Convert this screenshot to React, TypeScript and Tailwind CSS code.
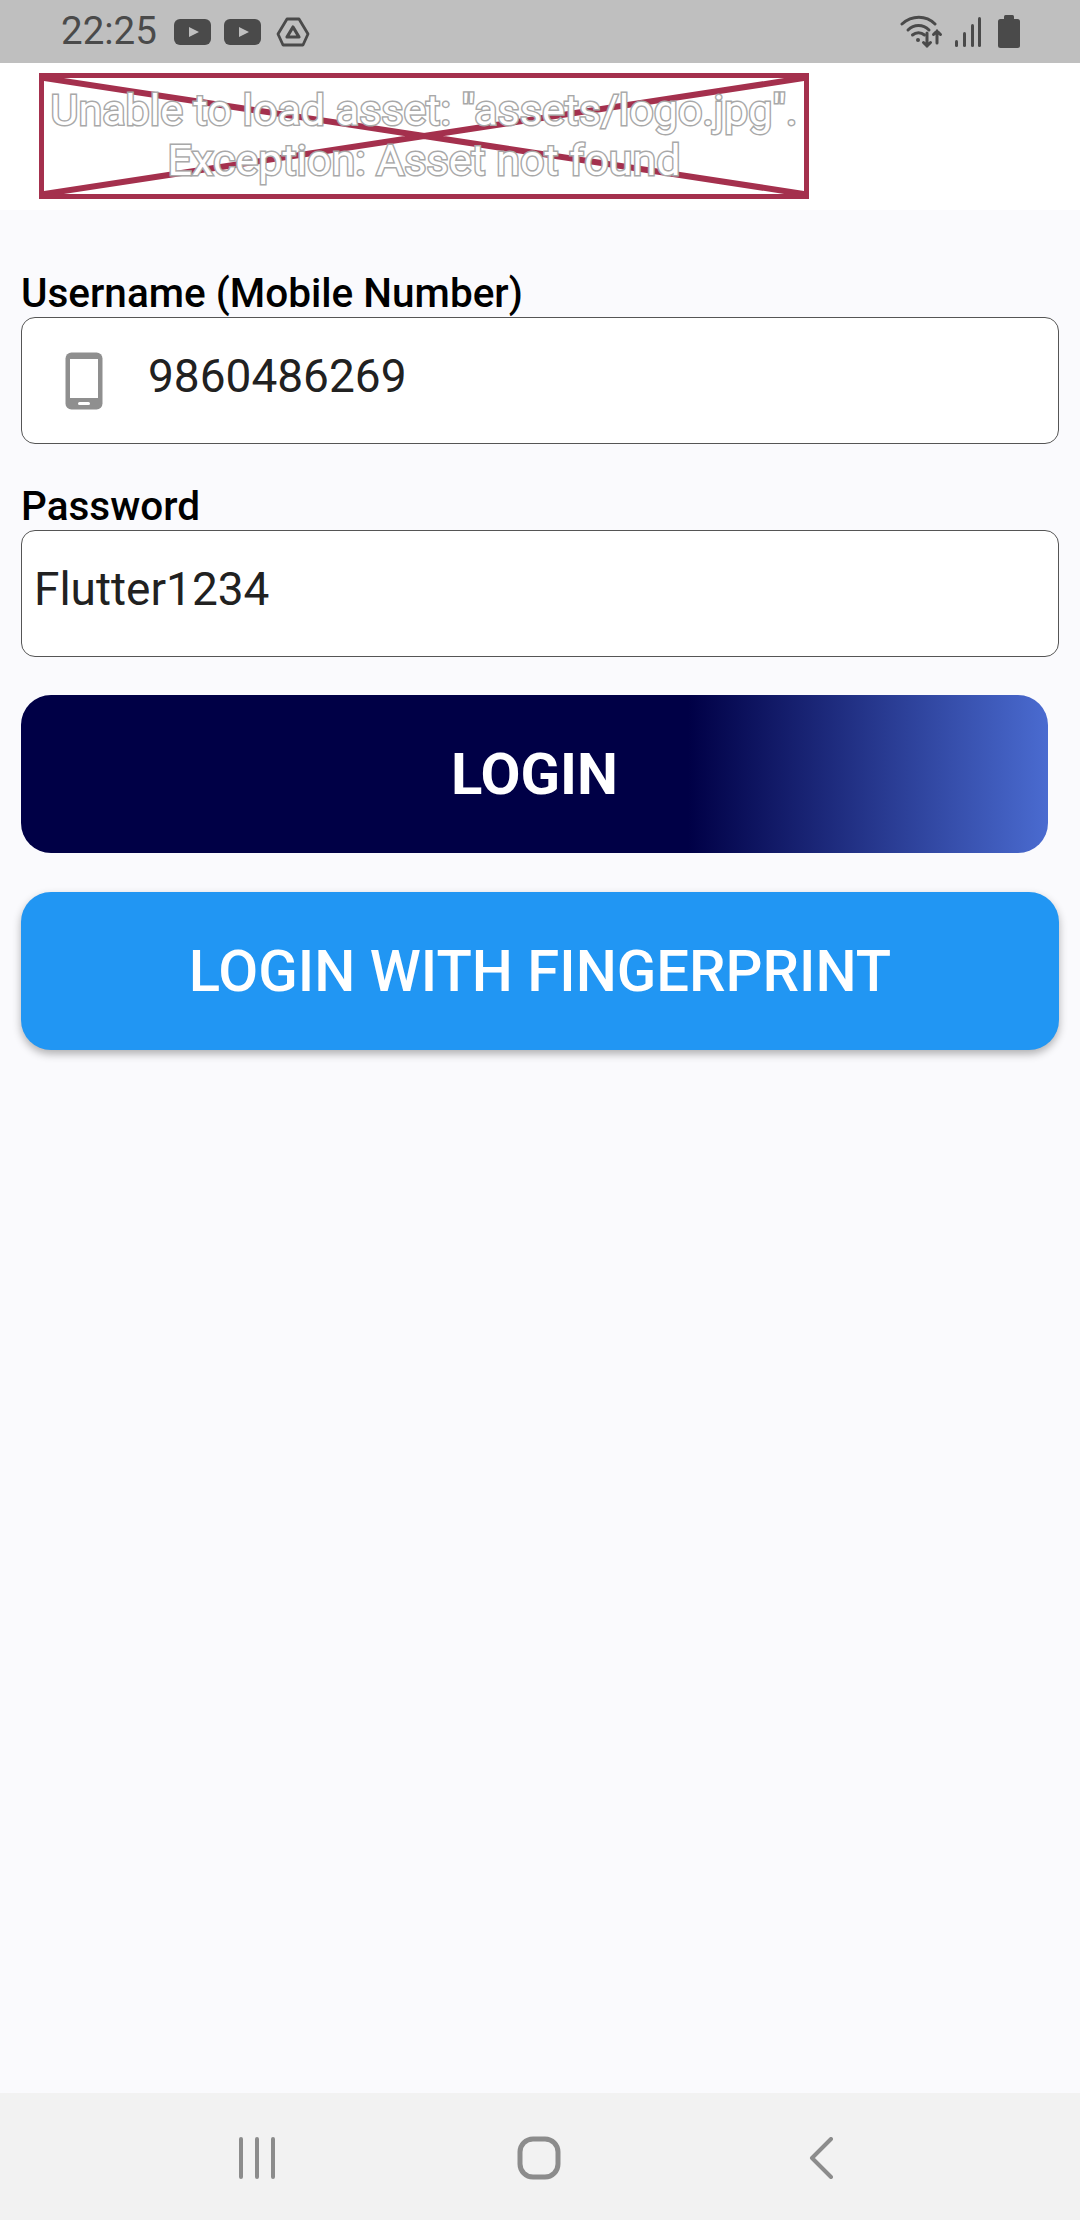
const font = "font-['Roboto',sans-serif]";

function PlayBadge() {
  return (
    <svg width="37" height="26" viewBox="0 0 37 26">
      <rect width="37" height="26" rx="6" fill="#4a4a4a" />
      <path d="M15 8 L25 13 L15 18 Z" fill="#bfbfbf" />
    </svg>
  );
}

function StatusBar() {
  return (
    <div className="h-[63px] bg-[#bfbfbf] flex items-center pl-[61px] pr-[60px] text-[#4a4a4a]">
      <span className="text-[38.5px] leading-none">22:25</span>
      <div className="ml-[17px] flex items-center gap-[13px]">
        <PlayBadge />
        <PlayBadge />
        <svg width="34" height="30" viewBox="0 0 34 30" className="ml-[2px]" fill="none" stroke="#4a4a4a">
          <path d="M11 2 H23 L32 17 L27 28 H7 L2 17 Z" strokeWidth="2.8" strokeLinejoin="round" />
          <path d="M17 10 L23 20 H11 Z" strokeWidth="3.2" strokeLinejoin="round" />
        </svg>
      </div>
      <div className="ml-auto flex items-center gap-[10px]">
        <svg width="44" height="34" viewBox="0 0 44 34" fill="none" stroke="#4a4a4a" strokeWidth="3" strokeLinecap="round">
          <path d="M2 9 C12 0 26 0 35 9" />
          <path d="M8 15 C14 9 23 9 29 15" />
          <path d="M12.5 20 C16 17 21 17 24.5 20" />
          <circle cx="18" cy="25" r="2" fill="#4a4a4a" stroke="none" />
          <path d="M27 18 V31 M23.5 27.5 L27 31 L30.5 27.5" />
          <path d="M37 28 V16 M33.5 19.5 L37 16 L40.5 19.5" />
        </svg>
        <svg width="28" height="32" viewBox="0 0 28 32" fill="#4a4a4a">
          <rect x="1" y="24" width="3" height="7" rx="1.5" />
          <rect x="9" y="16" width="3" height="15" rx="1.5" />
          <rect x="17" y="8" width="3" height="23" rx="1.5" />
          <rect x="24" y="1" width="3" height="30" rx="1.5" />
        </svg>
        <svg width="22" height="33" viewBox="0 0 22 33" fill="#4a4a4a" className="ml-[6px]">
          <rect x="6" y="0" width="10" height="5" rx="1.5" />
          <rect x="0" y="4" width="22" height="29" rx="2.5" />
        </svg>
      </div>
    </div>
  );
}

function LogoError() {
  return (
    <div className="h-[147px] bg-white pt-[10px] pl-[39px]">
      <div className="relative w-[770px] h-[126px] border-[5px] border-[#a4304d]">
        <svg className="absolute inset-0 w-full h-full" viewBox="0 0 760 116" preserveAspectRatio="none">
          <path d="M0 0 L760 116 M760 0 L0 116" stroke="#a4304d" strokeWidth="6" fill="none" />
        </svg>
        <div className="relative text-center text-white text-[43px] leading-[50px] mt-[7px] whitespace-nowrap [-webkit-text-stroke:3px_#a8a8a8] [paint-order:stroke_fill]">
          Unable to load asset: "assets/logo.jpg".
          <br />
          Exception: Asset not found
        </div>
      </div>
    </div>
  );
}

function Field({ children }: { children: React.ReactNode }) {
  return (
    <div className="h-[127px] bg-white border border-[#555] rounded-[14px] flex items-start text-[#212121] text-[46px] leading-none">
      {children}
    </div>
  );
}

function NavBar() {
  return (
    <div className="h-[127px] bg-[#f2f2f2] relative flex items-start pt-[44px] pl-[239px]">
      <svg width="38" height="42" viewBox="0 0 38 42" stroke="#8c8c8c" strokeWidth="4" strokeLinecap="round">
        <path d="M2 2 V40 M18 2 V40 M34 2 V40" />
      </svg>
      <svg width="44" height="44" viewBox="0 0 44 44" fill="none" stroke="#8c8c8c" strokeWidth="5" className="ml-[240px] -mt-[1px]">
        <rect x="3" y="3" width="38" height="38" rx="13" />
      </svg>
      <svg width="26" height="42" viewBox="0 0 26 42" fill="none" stroke="#8c8c8c" strokeWidth="4" strokeLinecap="round" strokeLinejoin="round" className="ml-[247px]">
        <path d="M23 2 L4 21 L23 40" />
      </svg>
    </div>
  );
}

export default function App() {
  return (
    <div className={`${font} w-[1080px] h-[2220px] bg-[#fafafd] flex flex-col overflow-hidden`}>
      <StatusBar />
      <LogoError />
      <main className="flex-1 px-[21px] pt-[60px]">
        <div className="text-[40.5px] font-medium leading-[47px] text-black relative z-10">Username (Mobile Number)</div>
        <Field>
          <svg width="38" height="58" viewBox="0 0 38 58" className="ml-[43px] mt-[34px]">
            <rect x="0.5" y="0.5" width="37" height="57" rx="6" fill="#8f8f8f" />
            <rect x="5" y="7" width="28" height="39" fill="#fff" />
            <rect x="13" y="50" width="12" height="3" rx="1.5" fill="#fff" />
          </svg>
          <span className="ml-[45px] mt-[35px]">9860486269</span>
        </Field>
        <div className="text-[40.5px] font-medium leading-[47px] text-black mt-[39px]">Password</div>
        <Field>
          <span className="ml-[12px] mt-[35px]">Flutter1234</span>
        </Field>
        <button className="mt-[38px] w-[1027px] h-[158px] rounded-[30px] bg-[linear-gradient(90deg,#000046_0%,#000046_65%,#4a6bd0_100%)] text-white text-[58px] font-bold flex items-center justify-center">
          LOGIN
        </button>
        <button className="mt-[39px] w-[1038px] h-[158px] rounded-[30px] bg-[#2196f3] text-white text-[58px] font-medium flex items-center justify-center shadow-[0_4px_8px_rgba(0,0,0,0.3)]">
          LOGIN WITH FINGERPRINT
        </button>
      </main>
      <NavBar />
    </div>
  );
}
